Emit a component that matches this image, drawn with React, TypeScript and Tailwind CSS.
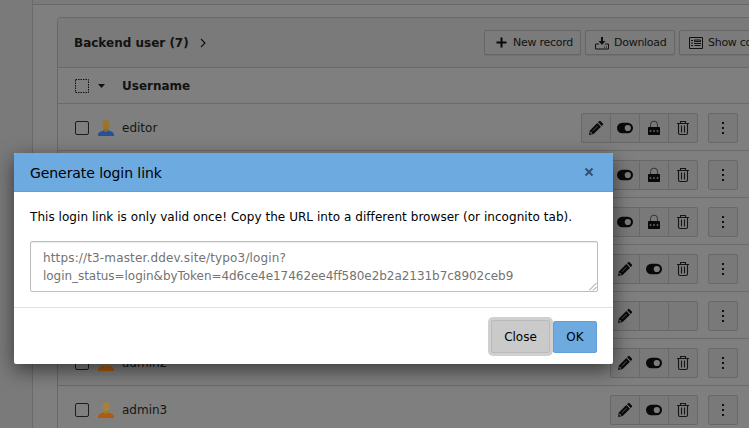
import React from "react";

type Action = "edit" | "toggle" | "lock" | "trash" | "empty";

type User = { name: string; admin: boolean; actions: Action[] };

const full: Action[] = ["edit", "toggle", "lock", "trash"];

const users: User[] = [
  { name: "editor", admin: false, actions: full },
  { name: "", admin: false, actions: full },
  { name: "", admin: false, actions: full },
  { name: "", admin: true, actions: ["edit", "toggle", "trash"] },
  { name: "", admin: true, actions: ["edit", "empty", "empty"] },
  { name: "admin2", admin: true, actions: ["edit", "toggle", "trash"] },
  { name: "admin3", admin: true, actions: ["edit", "toggle", "trash"] },
];

function ActionIcon({ kind }: { kind: Action }) {
  if (kind === "edit")
    return (
      <svg className="size-4" viewBox="0 0 16 16" fill="#090909">
        <path d="M1 15l.9-4.6 7.4-7.4 3.7 3.7-7.4 7.4z" />
        <path d="M10.1 2.2l1-1q.8-.7 1.5 0l2.2 2.2q.7.8 0 1.5l-1 1z" />
        <path d="M4.8 10.9l4.8-4.8" stroke="#666" strokeWidth=".8" />
        <path d="M2.7 11.5l1.8 1.8-1.5.4-.7-.7z" fill="#7a7a7a" />
      </svg>
    );
  if (kind === "toggle")
    return (
      <svg className="size-4" viewBox="0 0 16 16">
        <rect y="2.7" width="16" height="10.6" rx="5.3" fill="#090909" />
        <circle cx="10.8" cy="8" r="3.1" fill="#7b7b7b" />
      </svg>
    );
  if (kind === "lock")
    return (
      <svg className="size-4" viewBox="0 0 16 16">
        <path d="M4.5 7V4.6a3.5 3.5 0 0 1 7 0V7" fill="none" stroke="#333" strokeWidth="1" />
        <rect x="2" y="7" width="12" height="8" rx=".7" fill="#090909" />
        <path d="M3.7 10.2h1.6v1.6H3.7zm3.5 0h1.6v1.6H7.2zm3.5 0h1.6v1.6h-1.6z" fill="#777" />
      </svg>
    );
  if (kind === "trash")
    return (
      <svg className="size-4" viewBox="0 0 16 16" fill="none" stroke="#151515" strokeWidth="1.1">
        <path d="M2 3.5h12M5.5 3V1.5h5V3M3.5 4v9q0 1.5 1.5 1.5h6q1.5 0 1.5-1.5V4M6.5 5.5v7M9.5 5.5v7" />
      </svg>
    );
  return null;
}

function UserIcon({ admin }: { admin: boolean }) {
  return (
    <svg className="size-4" viewBox="0 0 16 16">
      <path d="M0 16v-1.6q.2-2 2.2-2.7L6 10.3h4l3.8 1.4q2 .7 2.2 2.7V16z" fill={admin ? "#b05a0c" : "#26509a"} />
      <path d="M5.8 7.5h4.4v3.6Q8 13.4 5.8 11.1z" fill={admin ? "#9a7834" : "#8b6826"} />
      <ellipse cx="8" cy="4.7" rx="3.4" ry="4.6" fill={admin ? "#a5823c" : "#9b742a"} />
    </svg>
  );
}

function ToolButton({ width, children }: { width: string; children: React.ReactNode }) {
  return (
    <div className={`${width} flex h-[25px] shrink-0 items-center overflow-hidden whitespace-nowrap rounded-[2px] border border-[#666] bg-[#7b7b7b] text-[11px] tracking-[-0.27px] shadow-[0_1px_1px_rgba(0,0,0,0.08)]`}>
      {children}
    </div>
  );
}

function UserRow({ user }: { user: User }) {
  return (
    <div className="flex h-[47px] items-center border-b border-[#6b6b6b] pl-[17px] pt-px">
      <div className="size-[14px] shrink-0 rounded-[2px] border border-[#1d1d1d]" />
      <div className="ml-[9px]"><UserIcon admin={user.admin} /></div>
      <div className="ml-2 flex-1 text-xs text-[#151515]">{user.name}</div>
      <div className="flex h-[30px] overflow-hidden rounded-[2px] border border-[#686868] bg-[#797979]">
        {user.actions.map((a, i) => (
          <div key={i} className="flex w-[29px] items-center justify-center border-r border-[#696969] last:w-7 last:border-r-0">
            <ActionIcon kind={a} />
          </div>
        ))}
      </div>
      <div className="ml-[10px] mr-[18px] flex h-[30px] w-[30px] shrink-0 items-center justify-center rounded-[2px] border border-[#686868] bg-[#797979]">
        <svg className="size-4" viewBox="0 0 16 16" fill="#101010">
          <path d="M7 2h2v2H7zM7 7h2v2H7zM7 12h2v2H7z" />
        </svg>
      </div>
    </div>
  );
}

function LoginLinkDialog() {
  return (
    <div className="absolute left-[14px] top-[153px] flex h-[211px] w-[599px] flex-col overflow-hidden rounded-[2px] bg-white text-black shadow-[0_6px_20px_rgba(0,0,0,0.55)]">
      <div className="flex h-[39px] items-center justify-between border-b border-[#619fd8] bg-[#6daae0] pl-4 pr-[19px]">
        <h1 className="pt-0.5 text-sm tracking-[-0.07px]">Generate login link</h1>
        <svg className="size-[10px]" viewBox="0 0 10 10" stroke="#315172" strokeWidth="2">
          <path d="M1.5 1.5l7 7M8.5 1.5l-7 7" />
        </svg>
      </div>
      <div className="h-[116px] shrink-0 border-b border-[#e1e1e1] px-4 pt-4">
        <p className="whitespace-nowrap text-xs leading-[18px] tracking-[0.05px]">This login link is only valid once! Copy the URL into a different browser (or incognito tab).</p>
        <div className="relative mt-[15px] h-[51px] w-[568px] rounded-[2px] border border-[#bdbdbd] pl-3 pt-[7px] text-xs leading-[18px] text-[#737373] shadow-[inset_0_1px_1px_rgba(0,0,0,0.08)]">
          <p className="tracking-[0.15px]">https://t3-master.ddev.site/typo3/login?</p>
          <p className="tracking-[-0.045px]">login_status=login&amp;byToken=4d6ce4e17462ee4ff580e2b2a2131b7c8902ceb9</p>
          <svg className="absolute bottom-0 right-0 size-2" viewBox="0 0 8 8" stroke="#777" strokeWidth=".8">
            <path d="M0 7.5L7.5 0M4 7.5L7.5 4" />
          </svg>
        </div>
      </div>
      <div className="flex flex-1 items-center justify-end gap-[3px] pr-4 pt-px text-xs">
        <div className="flex h-[33px] w-[59px] items-center justify-center rounded-[2px] border border-[#bababa] bg-[#cacaca] ring-3 ring-[#d0d0d0]">Close</div>
        <div className="flex h-8 w-11 items-center justify-center rounded-[2px] border border-[#639fd7] bg-[#6daae0]">OK</div>
      </div>
    </div>
  );
}

export default function App() {
  return (
    <div className="relative flex h-[428px] w-[749px] overflow-hidden bg-[#7a7a7a] font-['DejaVu_Sans',sans-serif] text-[#121212]">
      <div className="w-[33px] shrink-0 border-r border-[#6b6b6b]" />
      <main className="flex min-w-0 flex-1 flex-col bg-[#7f7f7f]">
        <div className="h-[5px] shrink-0 border-b border-[#686868] bg-[#7a7a7a]" />
        <section className="ml-6 mt-3 w-[700px] shrink-0 overflow-hidden rounded-tl-[4px] border border-[#686868]">
          <div className="flex h-[50px] items-center border-b border-[#696969] bg-[#7a7a7a] pl-4">
            <h2 className="text-xs font-bold">Backend user (7)</h2>
            <svg className="ml-[9px] size-[10px]" viewBox="0 0 10 10" fill="none" stroke="#111" strokeWidth="1.1">
              <path d="M3 1l4 4-4 4" />
            </svg>
            <div className="ml-auto mr-[-2px] flex gap-1">
              <ToolButton width="w-[97px]">
                <svg className="ml-[11px] mr-[6px] size-[11px]" viewBox="0 0 11 11" stroke="#090909" strokeWidth="2"><path d="M5.5.5v10M.5 5.5h10" /></svg>
                <span className="pt-px">New record</span>
              </ToolButton>
              <ToolButton width="w-[90px]">
                <svg className="ml-[8px] mr-[4px] size-4" viewBox="0 0 16 16" fill="none" stroke="#111">
                  <path d="M5 9H1.5v5h13V9H11" /><path d="M8 2v5" strokeWidth="2" /><path d="M4.5 6h7L8 10z" fill="#111" stroke="none" /><path d="M10 12h1M12 12h1" />
                </svg>
                <span className="pt-px">Download</span>
              </ToolButton>
              <ToolButton width="w-[79px]">
                <svg className="ml-[8px] mr-[4px] size-4 shrink-0" viewBox="0 0 16 16" fill="none" stroke="#111">
                  <path d="M1.5 2.5h13v11h-13z" /><path d="M3 5.5h2M3 8h2M3 10.5h2M6.5 5h6v1.5h-6zM6 8.5h7M6.5 10.5h6" />
                </svg>
                <span className="pt-px">Show columns</span>
              </ToolButton>
            </div>
          </div>
          <div className="flex h-9 items-center border-b border-[#6b6b6b] pl-[17px]">
            <svg className="size-[14px]" viewBox="0 0 14 14"><rect x=".5" y=".5" width="13" height="13" fill="none" stroke="#111" strokeDasharray="1.5 1" /></svg>
            <svg className="ml-[9px] h-1 w-[7px]" viewBox="0 0 7 4"><path d="M0 0h7L3.5 4z" fill="#111" /></svg>
            <span className="ml-[17px] pt-px text-xs font-bold">Username</span>
          </div>
          {users.map((user, i) => <UserRow key={i} user={user} />)}
        </section>
      </main>
      <LoginLinkDialog />
    </div>
  );
}
